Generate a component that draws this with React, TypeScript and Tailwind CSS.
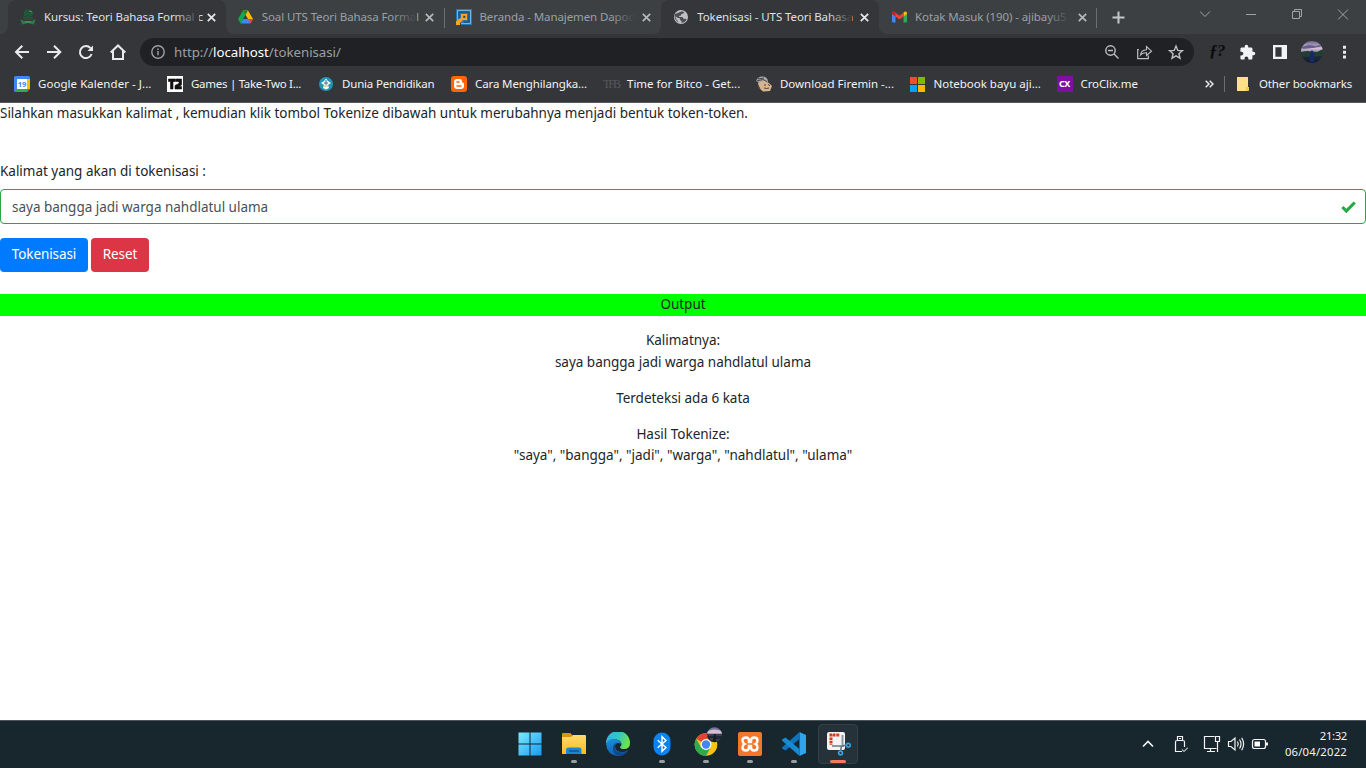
import React from "react";
import { MdExtension } from "react-icons/md";

type Kids = { children?: React.ReactNode };

function CloseX({ c }: { c: string }) {
  return (
    <svg className="ml-auto shrink-0" width="9" height="9" viewBox="0 0 9 9">
      <path d="M0.8 0.8L8.2 8.2M8.2 0.8L0.8 8.2" stroke={c} strokeWidth="1.7" />
    </svg>
  );
}

function Tab({ icon, title, track, fade, active = false }: { icon: React.ReactNode; title: string; track: string; fade: string; active?: boolean }) {
  const body = (
    <div className="flex h-[34px] w-[217.75px] items-center pl-3 pr-[10px]">
      <div className="flex size-4 shrink-0 items-center justify-center">{icon}</div>
      <div className={"relative ml-2 w-[155px] shrink-0 whitespace-nowrap text-[11.5px] leading-[18px] " + track + (active ? " text-[#dfe1e5]" : " text-[#9aa0a6]")}>
        {title}
        <div className={"absolute inset-y-0 right-0 w-6 bg-linear-to-r from-transparent " + fade} />
      </div>
      <CloseX c={active ? "#e8eaed" : "#b4b8bc"} />
    </div>
  );
  if (!active) return body;
  return (
    <div className="bg-[#3c4043]">
      <div className="rounded-t-lg bg-[#35363a]">{body}</div>
    </div>
  );
}

function Mark({ icon, w, track, children }: Kids & { icon: React.ReactNode; w: string; track: string }) {
  return (
    <div className={"flex shrink-0 items-center gap-2 whitespace-nowrap " + w}>
      <div className="flex size-4 shrink-0 items-center justify-center">{icon}</div>
      <span className={"text-[11.5px] leading-4 text-[#f1f3f4] " + track}>{children}</span>
    </div>
  );
}

const NuIcon = () => (
  <svg width="16" height="16" viewBox="0 0 16 16">
    <path d="M4 2L7 0.5L12 1.5L13.5 4L12 7L13 10L11 11H5L3 9L4 6Z" fill="#1f5b36" />
    <path d="M0.5 10L4 12H12L15.5 10L14 15.5L8 14L2 15.5Z" fill="#2c7a48" />
    <path d="M5 4Q8 1 11 4M4 8Q8 5 12 8M5 10Q8 8 11 10" stroke="#35363a" fill="none" strokeWidth=".8" />
    <path d="M5 13H11M9 2L12 3" stroke="#6fae86" strokeWidth=".7" />
  </svg>
);
const Drive = () => (
  <svg width="15" height="14" viewBox="0 0 15 14">
    <path d="M5 0.5H10L15 9H10Z" fill="#ffba00" />
    <path d="M5 0.5L7.5 4.8L2.5 13.3L0 9Z" fill="#0fa958" />
    <path d="M5 9H15L12.5 13.4H2.5Z" fill="#4285f4" />
    <path d="M10 9H15L12.5 13.4Z" fill="#ea4335" />
    <path d="M5 0.5H10L7.5 4.8Z" fill="#188038" />
  </svg>
);
const Dapo = () => (
  <svg width="16" height="16" viewBox="0 0 16 16">
    <path d="M0 0H16V16H5V11H0Z" fill="#2476b4" />
    <path d="M1.5 11V1.5H14.5V14.5H5" fill="none" stroke="#70b8df" />
    <path d="M3 9V3H13V13H8" fill="none" stroke="#24425c" strokeWidth="1" />
    <path d="M5 5H11V11H7L4 14V16H0V12L5 9Z" fill="#f6a623" />
    <rect x="7.3" y="6.8" width="2" height="2" fill="#24425c" />
  </svg>
);
const Globe = () => (
  <svg width="14" height="14" viewBox="0 0 14 14">
    <circle cx="7" cy="7" r="7" fill="#bdc1c6" />
    <path d="M8 1.2L10 2L9.5 3.5L7.3 4L7 5.5L5 6L5.3 7L8.5 7L9.5 8.7L12.7 9Q11 13 7.5 12.8V11L6 10V8.5L3.5 7.8L1.2 6.2Q1.8 9.5 4.5 12L3 11.5Q-.5 8 1.2 4Z" fill="#4b4e53" />
  </svg>
);
const Gmail = () => (
  <svg width="15" height="12" viewBox="0 0 15 12">
    <path d="M0 2.5V10.5Q0 11.5 1 11.5H3.5V4Z" fill="#4285f4" />
    <path d="M15 2.5V10.5Q15 11.5 14 11.5H11.5V4Z" fill="#34a853" />
    <path d="M11.5 5.6V1.5L13 .5Q15 0 15 2.5V3Z" fill="#fbbc04" />
    <path d="M0 3V2.5Q0 0 2 .5L7.5 4.7L11.8 1.3L11.5 5.6L7.5 8.6L3.4 5.6Z" fill="#ea4335" />
    <path d="M0 3V2.5Q0 0 2 .5L3.4 1.5V5.6Z" fill="#c5221f" />
  </svg>
);

function TabStrip() {
  return (
    <div className="flex h-[34px] bg-[#35363a]">
      <div className="w-2 rounded-br-lg bg-[#3c4043]" />
      <Tab active icon={<NuIcon />} title="Kursus: Teori Bahasa Formal c" track="tracking-[-0.1px]" fade="to-[#35363a]" />
      <div className="flex rounded-b-lg bg-[#3c4043]">
        <Tab icon={<Drive />} title="Soal UTS Teori Bahasa Formal" track="tracking-[-0.1px]" fade="to-[#3c4043]" />
        <div className="-mr-px mt-2 h-5 w-px bg-[#6b6e72]" />
        <Tab icon={<Dapo />} title="Beranda - Manajemen Dapod" track="tracking-[-0.1px]" fade="to-[#3c4043]" />
      </div>
      <Tab active icon={<Globe />} title="Tokenisasi - UTS Teori Bahasa" track="tracking-[-0.1px]" fade="to-[#35363a]" />
      <div className="flex flex-1 rounded-bl-lg bg-[#3c4043]">
        <Tab icon={<Gmail />} title="Kotak Masuk (190) - ajibayu5" track="tracking-[-0.1px]" fade="to-[#3c4043]" />
        <div className="-ml-px mt-2 h-5 w-px bg-[#6b6e72]" />
        <svg className="ml-[15px] mt-[11px]" width="13" height="13" viewBox="0 0 13 13">
          <path d="M6.5 0.5V12.5M0.5 6.5H12.5" stroke="#c4c7ca" strokeWidth="2" />
        </svg>
        <svg className="ml-auto" width="166" height="34" viewBox="1200 0 166 34" fill="none" stroke="#a0a3a6">
          <path d="M1200 11.5L1205 16.5L1210 11.5" />
          <path d="M1246 14.5H1256" />
          <path d="M1292.5 11.5H1299.5V18.5H1292.5ZM1294.5 11.5V9.5H1301.5V16.5H1299.5" />
          <path d="M1338 9.5L1348 19.5M1348 9.5L1338 19.5" />
        </svg>
      </div>
    </div>
  );
}

function Toolbar() {
  return (
    <div className="flex h-9 items-center bg-[#35363a]">
      <svg width="140" height="34" viewBox="0 35 140 34" fill="none" stroke="#e8eaed" strokeWidth="2">
        <path d="M29 52H16.5M22.3 45.7L16 52L22.3 58.3" />
        <path d="M47 52H60M54 45.7L60.3 52L54 58.3" />
        <path d="M90.5 48.2A6 6 0 1 0 91.6 54" />
        <path d="M93 45.5V51H87.5Z" fill="#e8eaed" stroke="none" />
        <path d="M110.7 52.5L118 45.5L125.3 52.5M113 51V59H123V51" />
      </svg>
      <div className="flex h-7 w-[1054px] items-center rounded-full bg-[#202124] pl-[11px]">
        <svg width="14" height="14" viewBox="0 0 14 14" fill="none" stroke="#9aa0a6">
          <circle cx="7" cy="7" r="6.2" strokeWidth="1.4" />
          <path d="M7 6V10.3M7 3.5V5" strokeWidth="1.5" />
        </svg>
        <div className="ml-[9px] whitespace-nowrap text-[13.3px] leading-5 tracking-[-0.05px] text-[#9aa0a6]">
          http://<span className="text-white">localhost</span>/tokenisasi/
        </div>
        <svg className="ml-auto" width="94" height="28" viewBox="1100 38 94 28" fill="none" stroke="#bdc1c6" strokeWidth="1.4">
          <circle cx="1110.5" cy="50.5" r="4.7" />
          <path d="M1114 54L1118.5 58.5M1108 50.5H1113" />
          <path d="M1139 49.5H1137.7V58.7H1148.3V55.5" strokeWidth="1.2" />
          <path d="M1140.5 55Q1141 50 1146.5 49.7V46.5L1151.5 51.2L1146.5 55.5V52.8Q1142.5 52.6 1140.5 55Z" strokeWidth="1.1" />
          <path d="M1176 46L1177.8 50.4L1182.4 50.7L1178.9 53.7L1180 58.2L1176 55.8L1172 58.2L1173.1 53.7L1169.6 50.7L1174.2 50.4Z" />
        </svg>
      </div>
      <div className="ml-[15px] w-4 whitespace-nowrap pb-[3px] font-['Liberation_Serif',serif] text-[17px] font-bold italic leading-5 tracking-[-0.5px] text-[#0a0a0b]">ƒ?</div>
      <MdExtension className="ml-[14px]" size={17} color="#f1f3f4" />
      <svg className="ml-auto" width="98" height="34" viewBox="1268 35 98 34">
        <path d="M1273 45H1287V59H1273ZM1275.4 47.2V56.8H1281.6V47.2Z" fill="#f1f3f4" fillRule="evenodd" />
        <defs>
          <clipPath id="av"><circle cx="1312" cy="52" r="11" /></clipPath>
          <linearGradient id="sky" x1="0" y1="0" x2="0" y2="1"><stop offset="0" stopColor="#6d6693" /><stop offset=".35" stopColor="#d9bfd2" /><stop offset=".5" stopColor="#7a86ab" /><stop offset=".55" stopColor="#20352f" /><stop offset="1" stopColor="#131a38" /></linearGradient>
        </defs>
        <g clipPath="url(#av)">
          <rect x="1301" y="41" width="22" height="22" fill="url(#sky)" />
          <path d="M1301 47L1309 45L1316 46L1323 44V46L1313 48L1303 49Z" fill="#62618e" />
          <path d="M1301 52L1307 51L1317 52L1323 49V56L1301 57Z" fill="#223d31" />
          <path d="M1310 53L1312 50L1314 53V62H1310Z" fill="#172a68" />
        </g>
        <path d="M1343 45.8h3v3h-3ZM1343 50.7h3v3h-3ZM1343 55.6h3v3h-3Z" fill="#e8eaed" />
      </svg>
    </div>
  );
}

function Bookmarks() {
  return (
    <div className="flex h-[33px] items-center border-b border-[#57585c] bg-[#35363a] pb-1 pl-[14px] pr-[14px]">
      <Mark w="w-[153px]" track="tracking-[0.05px]" icon={
        <svg width="16" height="16" viewBox="0 0 16 16"><path d="M0 1.5Q0 0 1.5 0H14.5Q16 0 16 1.5V12.5L12.5 16H1.5Q0 16 0 14.5Z" fill="#4285f4" /><path d="M13 3H16V13H13Z" fill="#fbbc04" /><path d="M1 13H13V16H1.5Z" fill="#34a853" /><path d="M13 13H16L13 16Z" fill="#ea4335" /><path d="M3 3H13V13H3Z" fill="#fff" /><text x="8" y="11" fontSize="7.5" fontWeight="bold" textAnchor="middle" fill="#4285f4">19</text></svg>}>Google Kalender - J...</Mark>
      <Mark w="w-[151px]" track="tracking-[-0.28px]" icon={
        <svg width="16" height="16" viewBox="0 0 16 16"><path d="M0 0H16V16H0Z" fill="#fff" /><path d="M1.5 3H8V5.5H6V13H3.5V5.5H1.5ZM8.5 3H14.5V9L11.5 10.5H14.5V13H8V9.5L12 7.5V5.5H8.5Z" fill="#111" stroke="#111" strokeWidth=".6" /></svg>}>Games | Take-Two I...</Mark>
      <Mark w="w-[133px]" track="tracking-[-0.18px]" icon={
        <svg width="14" height="14" viewBox="0 0 14 14"><circle cx="7" cy="7" r="7" fill="#2196b6" /><path d="M2 6L5 4L7 1.5L9 4L12 6L9 8L10 11L7 12.5L4 11L5 8Z" fill="#f5f7f7" /><path d="M5 6H9M7 3V8" stroke="#39798a" /><path d="M4 9H10" stroke="#d6b75a" /></svg>}>Dunia Pendidikan</Mark>
      <Mark w="w-[152px]" track="tracking-[-0.12px]" icon={
        <svg width="16" height="16" viewBox="0 0 16 16"><rect width="16" height="16" rx="3" fill="#ff6600" /><path d="M3 6Q3 3 6 3H8.5Q11 3 11 5.5Q11 6.7 12 6.7Q13 6.8 13 8V10Q13 13 10 13H6Q3 13 3 10Z" fill="#fff" /><path d="M6 6H8M6 10H10" stroke="#ff6600" strokeWidth="1.4" strokeLinecap="round" /></svg>}>Cara Menghilangka...</Mark>
      <Mark w="w-[153px]" track="tracking-[0px]" icon={<span className="font-['Liberation_Serif',serif] text-[12px] leading-4 tracking-[-2px] text-[#56575b]">TFB</span>}>Time for Bitco - Get...</Mark>
      <Mark w="w-[153.5px]" track="tracking-[-0.02px]" icon={
        <svg width="16" height="16" viewBox="0 0 16 16"><path d="M0 5Q2 0 7 0.5Q12 1 12 6L5 8Z" fill="#a7a9ab" /><path d="M2 7L8 5L13 7L16 10L14 15L7 15.5L3 12Z" fill="#d9b48d" /><path d="M0.5 5L7 3.5L11 5.5M8 9H10M12 8.5L14 9.5M8 12Q11 13 13 12M2 9L4 13M2 3L8 2" stroke="#4b4540" fill="none" /></svg>}>Download Firemin -...</Mark>
      <Mark w="w-[147px]" track="tracking-[-0.01px]" icon={
        <svg width="15" height="15" viewBox="0 0 15 15"><path d="M0 0H7V7H0Z" fill="#f25022" /><path d="M8 0H15V7H8Z" fill="#7fba00" /><path d="M0 8H7V15H0Z" fill="#00a4ef" /><path d="M8 8H15V15H8Z" fill="#ffb900" /></svg>}>Notebook bayu aji...</Mark>
      <Mark w="w-[100px]" track="tracking-[-0.1px]" icon={<span className="flex size-4 items-center justify-center bg-[#7f0ea3] text-[9px] font-bold leading-4 tracking-[-0.5px] text-white">CX</span>}>CroClix.me</Mark>
      <svg className="ml-auto mr-[10px]" width="9" height="8" viewBox="0 0 9 8" fill="none" stroke="#e8eaed" strokeWidth="1.5"><path d="M0.7 .7L4 4L.7 7.3M4.7 .7L8 4L4.7 7.3" /></svg>
      <div className="mr-[10px] h-4 w-px bg-[#6b6e72]" />
      <Mark w="w-[117px]" track="tracking-[-0.14px]" icon={<svg width="12" height="14" viewBox="0 0 12 14"><path d="M0 0H11V10H12V13L11 14H0Z" fill="#ffe089" /><path d="M9 10H12V13L11 14H9Z" fill="#f3c64f" /></svg>}>Other bookmarks</Mark>
    </div>
  );
}

function Content() {
  return (
    <main className="flex-1 bg-white text-[13.5px] leading-[21.6px] tracking-[-0.015px] text-[#212529]">
      <p>Silahkan masukkan kalimat , kemudian klik tombol Tokenize dibawah untuk merubahnya menjadi bentuk token-token.</p>
      <label className="mt-9 block">Kalimat yang akan di tokenisasi :</label>
      <div className="mt-[7px] flex h-[35px] items-center justify-between rounded-[4px] border border-[#28a745] pl-[11px] pr-[9px] text-[#495057]">
        <span className="pt-[3px]">saya bangga jadi warga nahdlatul ulama</span>
        <svg width="15" height="12" viewBox="0 0 15 12"><path d="M1.4 6L5.3 10L13.7 1.5" stroke="#28a745" strokeWidth="3.2" fill="none" /></svg>
      </div>
      <div className="mt-[14px] flex gap-[3px] tracking-[-0.1px] text-white">
        <button className="h-[34px] w-[88px] rounded-[4px] bg-[#007bff]">Tokenisasi</button>
        <button className="h-[34px] w-[58px] rounded-[4px] bg-[#dc3545]">Reset</button>
      </div>
      <div className="mt-[22px] h-[22px] bg-[#00ff00] text-center">Output</div>
      <div className="flex flex-col gap-[14.4px] pt-[13.8px] text-center">
        <p>Kalimatnya:<br />saya bangga jadi warga nahdlatul ulama</p>
        <p>Terdeteksi ada 6 kata</p>
        <p>Hasil Tokenize:<br />"saya", "bangga", "jadi", "warga", "nahdlatul", "ulama"</p>
      </div>
    </main>
  );
}

function TaskItem({ children, dot = true }: Kids & { dot?: boolean }) {
  return (
    <div className="flex h-[47px] w-11 flex-col items-center pt-[11px]">
      <div className="h-6">{children}</div>
      {dot && <div className="mt-[4px] h-[3px] w-[6px] rounded-full bg-[#9a9fa2]" />}
    </div>
  );
}

function Taskbar() {
  return (
    <footer className="flex h-12 border-t border-[#4a5459] bg-[#18262e]">
      <div className="ml-[508px] flex">
        <TaskItem dot={false}>
          <svg width="24" height="24" viewBox="0 0 24 24"><defs><linearGradient id="win" x1="0" y1="0" x2="1" y2="1"><stop stopColor="#7ceafd" /><stop offset="1" stopColor="#169bf5" /></linearGradient></defs><path d="M.5 .5H11.5V11.5H.5ZM12.5 .5H23.5V11.5H12.5ZM.5 12.5H11.5V23.5H.5ZM12.5 12.5H23.5V23.5H12.5Z" fill="url(#win)" /></svg>
        </TaskItem>
        <TaskItem>
          <svg width="24" height="24" viewBox="0 0 24 24"><defs><linearGradient id="fol" x1="0" y1="0" x2="0" y2="1"><stop stopColor="#ffda6b" /><stop offset="1" stopColor="#fbbd22" /></linearGradient></defs><path d="M0 2Q0 1 1 1H8.5L11 4V8H0Z" fill="#d99407" /><path d="M0 5H9L11 3H23Q24 3 24 4V22H0Z" fill="url(#fol)" /><path d="M4 22V18Q4 15.5 6.5 15.5H17Q19.5 15.5 19.5 18V22Z" fill="#1a86d4" /><path d="M7 19H17" stroke="#0b549c" strokeWidth="1.4" /></svg>
        </TaskItem>
        <TaskItem dot={false}>
          <svg width="24" height="24" viewBox="0 0 24 24"><defs><linearGradient id="edge" x1="0" y1="0" x2="1" y2="0.3"><stop stopColor="#2bb3e8" /><stop offset=".55" stopColor="#31c5c7" /><stop offset="1" stopColor="#6be34c" /></linearGradient><linearGradient id="edg2" x1="0" y1="0" x2="0" y2="1"><stop stopColor="#178fdd" /><stop offset="1" stopColor="#1260b4" /></linearGradient></defs><path d="M0 11A12 12 0 0 1 24 11Q24 17 18 17Q14 17 14 15Q15.5 14 15.5 12Q15 8 9 7Q3 7 0 12Z" fill="url(#edge)" /><path d="M0 12Q2 7 8 7Q13 7 15.5 12Q10 9 9 14Q9 20 17 20Q20 20 22 18Q18 24 12 24Q1 23 0 12Z" fill="url(#edg2)" /><path d="M9 14Q8.5 20 16 20.5Q20 20.5 22.5 18Q19 24 13 24Q6 22 7 15Q8 11 12 10Q9 11 9 14Z" fill="#114a8b" /></svg>
        </TaskItem>
        <TaskItem>
          <svg width="18" height="24" viewBox="0 0 18 24"><rect x=".5" y=".5" width="17" height="23" rx="8.5" fill="#0a84f5" /><path d="M4.7 8.2L13 15.6L9 19.3V4.7L13 8.4L4.7 15.8" fill="none" stroke="#fff" strokeWidth="1.4" /></svg>
        </TaskItem>
        <TaskItem>
          <svg className="overflow-visible" width="24" height="24" viewBox="0 0 24 24"><circle cx="12" cy="12.5" r="11.3" fill="#fbc116" /><path d="M12 12.5L2.2 6.8A11.3 11.3 0 0 1 21.8 6.8H12Z" fill="#e24335" /><path d="M2.2 6.8A11.3 11.3 0 0 0 12 23.8L16.5 15.5L7 15.4Z" fill="#2da94f" /><circle cx="12" cy="12.5" r="5.4" fill="#fff" /><circle cx="12" cy="12.5" r="4.2" fill="#4285f4" /><defs><clipPath id="av2"><circle cx="20.5" cy="2.8" r="7.5" /></clipPath></defs><g clipPath="url(#av2)"><rect x="13" y="-6" width="16" height="18" fill="#20273a" /><path d="M13 -6H29V2H13Z" fill="#7c729a" /><path d="M13 -1L20 -2.5L29 -1V1.5H13Z" fill="#d4c0d6" /><path d="M13 3H28M16 7H19M22 8H26" stroke="#4b5a58" /><path d="M20 2H22V10H19Z" fill="#161a2c" /></g></svg>
        </TaskItem>
        <TaskItem>
          <svg width="24" height="24" viewBox="0 0 24 24"><rect width="24" height="24" rx="2" fill="#f3762b" /><path d="M8 5.5Q4.5 5.5 4.5 8.5Q4.5 11 6.5 12Q4.5 13 4.5 15.5Q4.5 18.5 8 18.5Q11 18.5 11 15V14H13V15Q13 18.5 16 18.5Q19.5 18.5 19.5 15.5Q19.5 13 17.5 12Q19.5 11 19.5 8.5Q19.5 5.5 16 5.5Q13 5.5 13 9V10H11V9Q11 5.5 8 5.5Z" fill="none" stroke="#fff" strokeWidth="2.4" /></svg>
        </TaskItem>
        <TaskItem>
          <svg width="24" height="24" viewBox="0 0 24 24"><path d="M17.5 0L24 3V21L17.5 24Z" fill="#2fa5ef" /><path d="M17.5 0V7L3.5 18.5L0 16.5V15.5Z" fill="#0f74bd" /><path d="M17.5 24V17L3.5 5.5L0 7.5V8.5Z" fill="#168bd4" /></svg>
        </TaskItem>
        <div className="ml-[2px] mt-[3px] flex h-10 w-10 flex-col items-center rounded-[4px] border border-[#334048] bg-[#263239] pt-[6px]">
          <svg className="ml-[1px] shrink-0" width="24" height="26" viewBox="0 0 24 26"><rect y="1" width="18" height="18" rx="2" fill="#f4f4f4" /><path d="M2.5 4H13M4 3V14" stroke="#d53c12" strokeWidth="3" strokeDasharray="2.6 .8" /><path d="M15.5 4V16M5 15H17" stroke="#8f989f" strokeWidth="2" /><path d="M15 15L20 14M14.5 15L13.5 20" stroke="#60747f" strokeWidth="1.5" /><circle cx="21.3" cy="14.3" r="1.9" fill="none" stroke="#2fa3e6" strokeWidth="1.7" /><circle cx="13.5" cy="22" r="1.9" fill="none" stroke="#2fa3e6" strokeWidth="1.7" /></svg>
          <div className="mt-[3px] h-[3px] w-4 shrink-0 rounded-full bg-[#f4775f]" />
        </div>
      </div>
      <svg className="ml-auto" width="132" height="47" viewBox="1140 721 132 47" fill="none" stroke="#f1f3f4" strokeWidth="1.2">
        <path d="M1143 746.5L1148 741.5L1153 746.5" strokeWidth="1.7" />
        <path d="M1177.5 740.5V736.5H1182.5V740.5M1182 751.5H1175.5V742Q1175.5 740.5 1177 740.5H1183Q1184.5 740.5 1184.5 742V747M1179 738.5H1181" />
        <path d="M1182 749.5L1184 751.5L1187.8 747.8" stroke="#aeb4b7" />
        <path d="M1214.5 736.5H1204.5V748.5H1216.5M1210.5 748.5V751M1207 751.5H1215M1215.5 736.5H1219.5V741.5H1215.5ZM1217.5 742V752" />
        <path d="M1228.5 741.5V746.5H1231L1235 750V738L1231 741.5ZM1237.5 741.5Q1239 744 1237.5 746.5M1239.5 739.5Q1242.5 744 1239.5 748.5M1241.7 737.8Q1245.5 744 1241.7 750.2" />
        <rect x="1252.5" y="739.5" width="13" height="9" rx="2" />
        <path d="M1254.5 741.5H1260V746.5H1254.5Z" fill="#fff" stroke="none" />
        <path d="M1267 742.5V745.5" strokeWidth="2" />
      </svg>
      <div className="mr-[19px] w-[75px] whitespace-nowrap pt-[7px] text-right text-[11.3px] leading-4 text-[#f1f3f4]">
        <div className="tracking-[-0.35px]">21:32</div>
        <div className="tracking-[0.2px]">06/04/2022</div>
      </div>
    </footer>
  );
}

export default function App() {
  return (
    <div className="flex h-[768px] w-[1366px] flex-col overflow-hidden font-['Noto_Sans','Open_Sans',sans-serif]">
      <TabStrip />
      <Toolbar />
      <Bookmarks />
      <Content />
      <Taskbar />
    </div>
  );
}
